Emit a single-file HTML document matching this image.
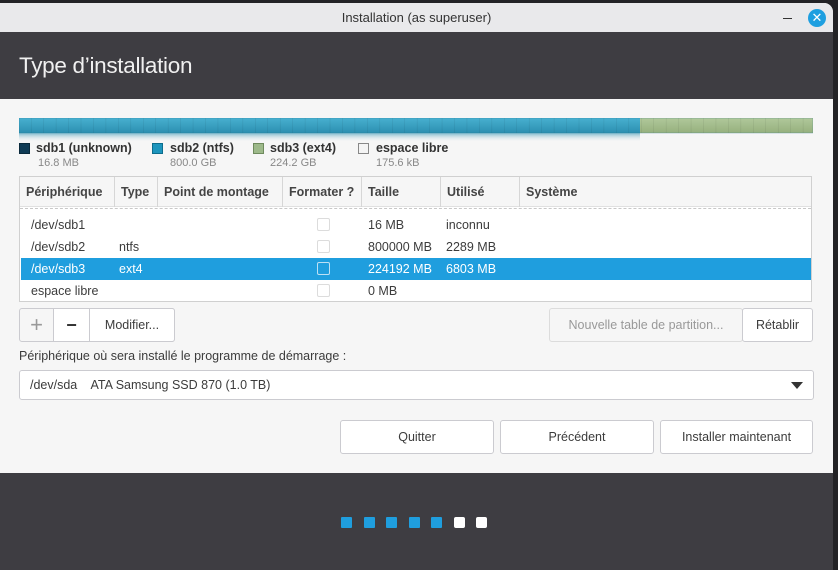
<!DOCTYPE html>
<html><head><meta charset="utf-8"><style>
*{box-sizing:border-box;margin:0;padding:0}
body{width:838px;height:570px;background:#232326;position:relative;overflow:hidden;font-family:"Liberation Sans","DejaVu Sans",sans-serif;font-size:12.5px;color:#3c3c3c}
.a{position:absolute}
#win{left:0;top:3px;width:833px;height:567px;background:#f6f6f6;border-top-right-radius:9px;overflow:hidden}
#tb{left:0;top:0;width:833px;height:29px;background:#e9e9eb;text-align:center;line-height:29px;font-size:13px;color:#333}
#hd{left:0;top:29px;width:833px;height:67px;background:#3e3d42;color:#f0f0f0;font-size:22.5px;padding:21px 0 0 19px;letter-spacing:-0.3px}
.btn{position:absolute;background:#fff;border:1px solid #cbcbd0;border-radius:3px;text-align:center;color:#3c3c3c}
.th{position:absolute;top:0;height:30px;line-height:30px;font-weight:bold;color:#444;border-right:1px solid #d6d6d6;padding-left:6px;font-size:12.5px}
.row{position:absolute;left:1px;width:790px;height:22px;line-height:22px}
.row span{position:absolute}
.cb{position:absolute;left:296px;top:4px;width:13px;height:13px;border:1px solid #dcdcdc;border-radius:2px;background:#fff}
.dot{position:absolute;top:517px;width:11px;height:11px;border-radius:1px}
</style></head><body>
<div id="win" class="a">
<div id="tb" class="a">Installation (as superuser)
<div class="a" style="left:783px;top:15px;width:9px;height:1px;background:#333"></div>
<div class="a" style="left:808px;top:6px;width:18px;height:18px;border-radius:50%;background:#1e9fe0;color:#fff;line-height:18px;font-size:13px">✕</div>
</div>
<div id="hd" class="a">Type d’installation</div>
</div>
<svg class="a" style="left:19px;top:118px" width="794" height="26">
<defs><linearGradient id="g1" x1="0" y1="0" x2="0" y2="1"><stop offset="0" stop-color="#48b0d0"/><stop offset="1" stop-color="#2b8fb0"/></linearGradient>
<linearGradient id="g2" x1="0" y1="0" x2="0" y2="1"><stop offset="0" stop-color="#b0c89a"/><stop offset="1" stop-color="#96b07e"/></linearGradient>
<linearGradient id="r" x1="0" y1="0" x2="0" y2="1"><stop offset="0" stop-color="#2a8fb0" stop-opacity=".6"/><stop offset="1" stop-color="#f6f6f6" stop-opacity="0"/></linearGradient>
<pattern id="p" width="12.45" height="16" patternUnits="userSpaceOnUse"><rect x="12" width="0.6" height="16" fill="#000" opacity=".12"/></pattern></defs>
<rect width="621" height="15" fill="url(#g1)"/>
<rect x="621" width="173" height="15" fill="url(#g2)"/>
<rect width="794" height="15" fill="url(#p)"/>
<rect width="794" height="15" fill="none" stroke="#2a7590" stroke-width="0.6" opacity=".5"/>
<rect y="15" width="621" height="9" fill="url(#r)"/>
</svg>
<div class="a" style="left:19px;top:143px;width:11px;height:11px;background:#0f3b55;border:1px solid #0a2a3c"></div>
<div class="a" style="left:36px;top:141px;font-weight:bold;color:#333">sdb1 (unknown)</div>
<div class="a" style="left:38px;top:157px;font-size:11px;color:#888">16.8 MB</div>
<div class="a" style="left:152px;top:143px;width:11px;height:11px;background:#1d95bd;border:1px solid #0d6d8d"></div>
<div class="a" style="left:170px;top:141px;font-weight:bold;color:#333">sdb2 (ntfs)</div>
<div class="a" style="left:170px;top:157px;font-size:11px;color:#888">800.0 GB</div>
<div class="a" style="left:253px;top:143px;width:11px;height:11px;background:#9db98a;border:1px solid #6f8b5e"></div>
<div class="a" style="left:270px;top:141px;font-weight:bold;color:#333">sdb3 (ext4)</div>
<div class="a" style="left:270px;top:157px;font-size:11px;color:#888">224.2 GB</div>
<div class="a" style="left:358px;top:143px;width:11px;height:11px;background:#f4f4f4;border:1px solid #888"></div>
<div class="a" style="left:376px;top:141px;font-weight:bold;color:#333">espace libre</div>
<div class="a" style="left:376px;top:157px;font-size:11px;color:#888">175.6 kB</div>
<div class="a" style="left:19px;top:176px;width:793px;height:126px;background:#fff;border:1px solid #d0d0d0;overflow:hidden">
<div class="a" style="left:10px;top:19px;color:#555">/dev/sda</div>
<div class="a" style="left:0;top:0;width:791px;height:30px;background:#f6f6f6;border-bottom:1px solid #e0e0e0"></div>
<div class="th" style="left:0;width:95px">Périphérique</div>
<div class="th" style="left:95px;width:43px">Type</div>
<div class="th" style="left:138px;width:125px">Point de montage</div>
<div class="th" style="left:263px;width:79px">Formater ?</div>
<div class="th" style="left:342px;width:79px">Taille</div>
<div class="th" style="left:421px;width:79px">Utilisé</div>
<div class="th" style="left:500px;width:120px;border:none">Système</div>
<div class="a" style="left:0;top:31px;width:791px;height:6px;background:#fff;border-top:1px dashed #c8c8c8"></div>
<div class="row" style="top:37px"><span style="left:10px">/dev/sdb1</span><div class="cb"></div><span style="left:347px">16 MB</span><span style="left:425px">inconnu</span></div>
<div class="row" style="top:59px"><span style="left:10px">/dev/sdb2</span><span style="left:98px">ntfs</span><div class="cb"></div><span style="left:347px">800000 MB</span><span style="left:425px">2289 MB</span></div>
<div class="row" style="top:81px;background:#1f9ede;color:#fff"><span style="left:10px">/dev/sdb3</span><span style="left:98px">ext4</span><div class="cb" style="background:transparent;border-color:#bde0f4"></div><span style="left:347px">224192 MB</span><span style="left:425px">6803 MB</span></div>
<div class="row" style="top:103px"><span style="left:10px">espace libre</span><div class="cb"></div><span style="left:347px">0 MB</span></div>
</div>
<div class="btn" style="left:19px;top:308px;width:156px;height:34px;background:#f6f6f6"></div>
<div class="a" style="left:19px;top:308px;width:35px;height:34px;text-align:center;line-height:33px;font-size:22px;color:#999">+</div>
<div class="btn" style="left:53px;top:308px;width:37px;height:34px;border-radius:0;line-height:32px;font-size:18px;font-weight:bold;color:#333">−</div>
<div class="btn" style="left:89px;top:308px;width:86px;height:34px;line-height:32px;border-radius:0 3px 3px 0">Modifier...</div>
<div class="btn" style="left:549px;top:308px;width:194px;height:34px;line-height:32px;background:#f6f6f6;color:#999;border-color:#dcdcdc">Nouvelle table de partition...</div>
<div class="btn" style="left:742px;top:308px;width:71px;height:34px;line-height:32px">Rétablir</div>
<div class="a" style="left:19px;top:349px">Périphérique où sera installé le programme de démarrage :</div>
<div class="btn" style="left:19px;top:370px;width:795px;height:30px;line-height:28px;text-align:left;padding-left:10px">/dev/sda&nbsp;&nbsp;&nbsp; ATA Samsung SSD 870 (1.0 TB)
<div class="a" style="right:10px;top:11px;width:0;height:0;border-left:6px solid transparent;border-right:6px solid transparent;border-top:7px solid #333"></div></div>
<div class="btn" style="left:340px;top:420px;width:154px;height:34px;line-height:32px">Quitter</div>
<div class="btn" style="left:500px;top:420px;width:154px;height:34px;line-height:32px">Précédent</div>
<div class="btn" style="left:660px;top:420px;width:153px;height:34px;line-height:32px">Installer maintenant</div>
<div class="a" style="left:0;top:473px;width:833px;height:97px;background:#3e3d42"></div>
<div class="dot" style="left:341px;background:#1f9ede"></div>
<div class="dot" style="left:364px;background:#1f9ede"></div>
<div class="dot" style="left:386px;background:#1f9ede"></div>
<div class="dot" style="left:409px;background:#1f9ede"></div>
<div class="dot" style="left:431px;background:#1f9ede"></div>
<div class="dot" style="left:454px;background:#fff;border-radius:2px"></div>
<div class="dot" style="left:476px;background:#fff;border-radius:2px"></div>
</body></html>
